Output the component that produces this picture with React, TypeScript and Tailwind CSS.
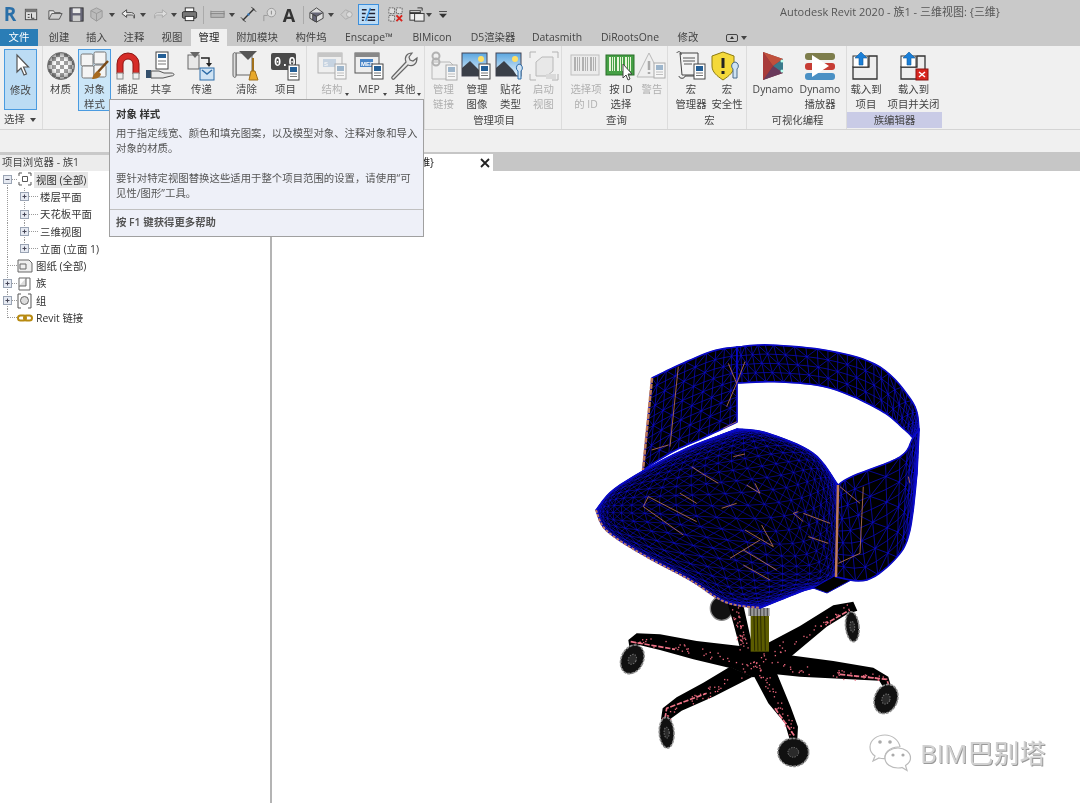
import type { ReactNode } from "react";

type P = [number, number];

// ---------- chair geometry helpers ----------
function smooth(p: P[], n = 8): P[] {
  const out: P[] = [];
  const len = p.length;
  const at = (i: number) => p[Math.max(0, Math.min(len - 1, i))];
  for (let i = 0; i < len - 1; i++) {
    const [a, b, c, d] = [at(i - 1), at(i), at(i + 1), at(i + 2)];
    for (let k = 0; k < n; k++) {
      const t = k / n;
      const f = (j: number) =>
        0.5 *
        (2 * b[j] +
          (c[j] - a[j]) * t +
          (2 * a[j] - 5 * b[j] + 4 * c[j] - d[j]) * t * t +
          (3 * b[j] - a[j] - 3 * c[j] + d[j]) * t * t * t);
      out.push([f(0), f(1)]);
    }
  }
  out.push(p[len - 1]);
  return out;
}

function sample(p: P[], u: number): P {
  const x = u * (p.length - 1);
  const i = Math.min(Math.floor(x), p.length - 2);
  const t = x - i;
  return [p[i][0] + (p[i + 1][0] - p[i][0]) * t, p[i][1] + (p[i + 1][1] - p[i][1]) * t];
}

const pts = (a: P[]) => a.map((q) => `${q[0].toFixed(1)} ${q[1].toFixed(1)}`).join(" L");
const seg = (a: P, b: P) => `M${a[0].toFixed(1)} ${a[1].toFixed(1)} L${b[0].toFixed(1)} ${b[1].toFixed(1)} `;

function meshPath(grid: P[][]) {
  let d = "";
  const cols = grid.length - 1;
  grid.forEach((col, c) => {
    d += `M${pts(col)} `;
    if (c < cols) {
      col.forEach((q, r) => {
        d += seg(q, grid[c + 1][r]);
        if (r < col.length - 1) {
          d += (c + r) % 2 === 0 ? seg(q, grid[c + 1][r + 1]) : seg(col[r + 1], grid[c + 1][r]);
        }
      });
    }
  });
  return d;
}

function Strip({ top, bottom, cols, rows }: { top: P[]; bottom: P[]; cols: number; rows: number }) {
  const t = smooth(top);
  const b = smooth(bottom);
  const grid: P[][] = [];
  for (let c = 0; c <= cols; c++) {
    const u = c / cols;
    const a = sample(t, u);
    const e = sample(b, u);
    const col: P[] = [];
    for (let r = 0; r <= rows; r++) {
      const v = r / rows;
      col.push([a[0] + (e[0] - a[0]) * v, a[1] + (e[1] - a[1]) * v]);
    }
    grid.push(col);
  }
  return (
    <g>
      <path d={`M${pts(t)} L${pts([...b].reverse())} Z`} fill="#000" stroke="#0808c0" strokeWidth="1.600" />
      <path d={meshPath(grid)} fill="none" stroke="#0c0cd0" strokeWidth="0.7" />
    </g>
  );
}

function Seat() {
  const A: P = [596, 510];
  const B: P = [737, 429];
  const C: P = [838, 485];
  const D: P = [760, 608];
  const c0 = smooth([A, [613, 490], [650, 467], [690, 447], B]);
  const c1 = smooth([D, [800, 592], [833, 578], [840, 537], C]);
  const c2 = smooth([A, [606, 530], [640, 553], [690, 580], [725, 602], D]);
  const c3 = smooth([B, [767, 433], [813, 453], C]);
  const ease = (x: number) => 0.5 - 0.5 * Math.cos(Math.PI * x);
  const N = 32;
  const grid: P[][] = [];
  for (let i = 0; i <= N; i++) {
    const u = ease(i / N);
    const col: P[] = [];
    for (let j = 0; j <= N; j++) {
      const v = ease(j / N);
      const a = sample(c0, u);
      const b = sample(c1, u);
      const c = sample(c2, v);
      const e = sample(c3, v);
      const f = (k: number) =>
        (1 - v) * a[k] + v * b[k] + (1 - u) * c[k] + u * e[k] -
        ((1 - u) * (1 - v) * A[k] + u * (1 - v) * B[k] + (1 - u) * v * D[k] + u * v * C[k]);
      col.push([f(0), f(1)]);
    }
    grid.push(col);
  }
  const outline = [...c0, ...c3, ...[...c1].reverse(), ...[...c2].reverse()];
  return (
    <g>
      <path d={`M${pts(outline)} Z`} fill="#000" stroke="#0606b8" strokeWidth="1.400" />
      <path d={meshPath(grid)} fill="none" stroke="#0c0cd0" strokeWidth="0.6" />
      <path d={`M${pts(c2)}`} fill="none" stroke="#b87862" strokeWidth="2" strokeDasharray="3 1.500" />
      <path d="M813 588 L827 593 L855 578 L838 574 Z" fill="#000" stroke="#0808c0" strokeWidth="1" />
    </g>
  );
}

const orangeSeat = [
  [460, 320, 495, 312], [335, 350, 365, 370], [365, 370, 415, 400], [500, 405, 540, 430], [540, 430, 525, 400],
  [205, 440, 350, 515], [205, 440, 190, 470], [190, 470, 310, 555], [300, 430, 350, 460], [425, 475, 470, 460],
  [640, 490, 670, 515], [640, 490, 655, 485], [670, 490, 750, 520], [495, 540, 580, 590], [545, 525, 580, 590],
  [540, 570, 450, 625], [490, 600, 590, 660], [490, 645, 570, 690], [685, 560, 745, 580],
];
const orangeBack = [
  [445, 40, 470, 100], [495, 35, 470, 100], [470, 100, 440, 170], [430, 235, 470, 215], [215, 300, 265, 285], [295, 50, 270, 290],
];
const orangeFront = [[780, 410, 840, 460], [850, 410, 840, 610], [775, 640, 840, 610], [985, 380, 990, 400]];

function Lines({ list, w = 2.400 }: { list: number[][]; w?: number }) {
  return (
    <g transform="translate(580 350) scale(0.3333)" stroke="#c87c58" strokeWidth={w}>
      {list.map((l, i) => (
        <line key={i} x1={l[0]} y1={l[1]} x2={l[2]} y2={l[3]} />
      ))}
    </g>
  );
}

const legs = [
  "380,60 430,75 462,220 420,205 400,130",
  "85,180 110,160 180,163 290,183 420,198 480,230 390,264 280,238 180,210 118,195 105,205 88,200",
  "505,188 600,138 700,76 760,65 772,92 742,102 680,140 575,228 480,240",
  "570,226 700,243 820,263 865,290 874,322 850,322 838,302 720,296 600,290 520,282 450,270",
  "460,285 530,278 572,380 594,440 592,478 568,475 555,430 505,370",
  "390,260 458,290 340,350 245,392 214,415 205,425 183,418 188,385 230,352 310,308",
  "390,262 420,198 510,188 575,228 530,282 458,292",
];
const legLines: [P, P][] = [
  [[470, 250], [100, 175]],
  [[470, 250], [750, 80]],
  [[470, 250], [860, 300]],
  [[470, 250], [585, 470]],
  [[470, 250], [195, 410]],
  [[430, 200], [400, 80]],
];
const wheels = [
  [365, 85, 34, 36, 0],
  [97, 238, 33, 45, 25],
  [757, 140, 20, 45, -6],
  [858, 357, 34, 45, 22],
  [200, 458, 22, 46, -3],
  [580, 517, 46, 42, 0],
];

function Base() {
  let seed = 7;
  const rnd = () => {
    seed = (seed * 1103515 + 12345) % 2147483;
    return seed / 2147483;
  };
  const specks: number[][] = [];
  legLines.forEach(([a, b]) => {
    for (let i = 0; i < 40; i++) {
      const t = rnd();
      specks.push([a[0] + (b[0] - a[0]) * t + (rnd() - 0.5) * 26, a[1] + (b[1] - a[1]) * t + (rnd() - 0.5) * 26]);
    }
  });
  return (
    <g transform="translate(600 580) scale(0.3333)">
      {wheels.slice(0, 1).map((w, i) => (
        <ellipse key={i} cx={w[0]} cy={w[1]} rx={w[2]} ry={w[3]} fill="#111" stroke="#888" strokeWidth="4" />
      ))}
      {legs.map((l, i) => (
        <polygon key={i} points={l} fill="#000" />
      ))}
      <rect x="452" y="105" width="55" height="110" fill="#5c5c00" />
      {[462, 472, 482, 494].map((x) => (
        <line key={x} x1={x} y1="108" x2={x + 2} y2="212" stroke="#1e1e00" strokeWidth="2.500" />
      ))}
      <rect x="445" y="84" width="64" height="24" fill="#9a9a9a" />
      {[452, 462, 472, 482, 492, 502].map((x) => (
        <line key={x} x1={x} y1="84" x2={x} y2="108" stroke="#333" strokeWidth="2.500" />
      ))}
      {specks.map((s, i) => (
        <rect key={i} x={s[0]} y={s[1]} width="4" height="4" fill="#e8657a" />
      ))}
      <g fill="none" stroke="#f07488" strokeWidth="5" strokeDasharray="16 5">
        <path d="M92 185 L225 208" />
        <path d="M720 283 L860 298 L868 320" />
        <path d="M195 415 L200 385 L320 340" />
        <path d="M740 95 L680 130" />
        <path d="M525 385 L585 470" />
      </g>
      {wheels.slice(1).map((w, i) => (
        <g key={i} transform={`rotate(${w[4]} ${w[0]} ${w[1]})`}>
          <ellipse cx={w[0]} cy={w[1]} rx={w[2]} ry={w[3]} fill="#111" stroke="#8c8c8c" strokeWidth="5" strokeDasharray="9 3" />
          <ellipse cx={w[0]} cy={w[1]} rx={w[2] * 0.35} ry={w[3] * 0.35} fill="#2a2a2a" stroke="#777" strokeWidth="3" strokeDasharray="4 4" />
        </g>
      ))}
    </g>
  );
}

function Chair() {
  return (
    <svg width="808" height="632" viewBox="272 171 808 632" className="block">
      <Strip
        top={[[652, 378], [679, 365], [713, 351], [737, 347]]}
        bottom={[[643, 470], [672, 452], [705, 437], [737, 422]]}
        cols={10}
        rows={9}
      />
      <Strip
        top={[[737, 347], [770, 345], [830, 351], [880, 367], [913, 403], [919, 430]]}
        bottom={[[737, 383], [780, 382], [830, 388], [880, 410], [905, 430], [913, 438]]}
        cols={28}
        rows={4}
      />
      <Lines list={orangeBack} />
      <line x1="652" y1="378" x2="643" y2="470" stroke="#c07a58" strokeWidth="2.500" strokeDasharray="5 1" />
      <Base />
      <Seat />
      <Lines list={orangeSeat} />
      <Strip
        top={[[838, 485], [853, 476], [900, 457], [913, 438], [919, 430]]}
        bottom={[[836, 577], [867, 580], [897, 557], [910, 530], [917, 473]]}
        cols={12}
        rows={8}
      />
      <Lines list={orangeFront} />
      <line x1="838" y1="485" x2="836" y2="577" stroke="#c07a58" strokeWidth="2.500" />
    </svg>
  );
}

// ---------- quick access icons ----------
const S = ({ children }: { children: ReactNode }) => (
  <svg width="17" height="17" viewBox="0 0 18 18" fill="none" className="shrink-0">
    {children}
  </svg>
);
const Drop = () => (
  <svg width="6" height="4" viewBox="0 0 6 4" className="shrink-0">
    <path d="M0 0H6L3 4Z" fill="#444" />
  </svg>
);

type QatCell = { cls: string; icon: ReactNode };
const qat: QatCell[] = [
  { cls: "w-[20px]", icon: <span className="text-[19px] font-bold text-[#2a6fa8] leading-none">R</span> },
  { cls: "w-[22px]", icon: <S><rect x="2.500" y="3.500" width="12" height="11" fill="#ddd" stroke="#444" /><rect x="2.500" y="3.500" width="12" height="3" fill="#777" /><path d="M5 9h2M5 12h2M9 8v5h3" stroke="#333" /></S> },
  { cls: "w-[3px]", icon: null },
  { cls: "w-[21px]", icon: <S><path d="M2 14V5h5l1 2h6v2" stroke="#555" fill="#e8e8e8" /><path d="M2 14l3-6h11l-3 6Z" fill="#cfcfcf" stroke="#555" /></S> },
  { cls: "w-[20px]", icon: <S><rect x="2" y="2" width="14" height="14" fill="#667" stroke="#333" /><rect x="5" y="2.500" width="8" height="5" fill="#e8e8e8" /><rect x="5" y="10" width="8" height="6" fill="#ccc" /></S> },
  { cls: "w-[21px]", icon: <S><path d="M9 2l6 3v7l-6 4-6-4V5Z" fill="#bbb" stroke="#999" /><path d="M3 5l6 3 6-3M9 8v8" stroke="#999" /></S> },
  { cls: "w-[10px]", icon: <Drop /> },
  { cls: "w-[1px]", icon: null },
  { cls: "w-[20px]", icon: <S><path d="M7 4L2 8l5 4V9.500h5c2 0 3 1 3 3.500 1-3 0-6-3-6H7Z" fill="#eee" stroke="#444" /></S> },
  { cls: "w-[10px]", icon: <Drop /> },
  { cls: "w-[24px]", icon: <S><path d="M11 4l5 4-5 4V9.500H6c-2 0-3 1-3 3.500-1-3 0-6 3-6h5Z" fill="#ddd" stroke="#aaa" /></S> },
  { cls: "w-[4px]", icon: <Drop /> },
  { cls: "w-[27px]", icon: <S><rect x="4.500" y="2" width="9" height="4" fill="#fff" stroke="#333" /><rect x="1.500" y="6" width="15" height="7" rx="1.500" fill="#777" stroke="#333" /><rect x="4.500" y="11" width="9" height="4.500" fill="#fff" stroke="#333" /></S> },
  { cls: "w-[1px]", icon: <span className="block w-px h-[18px] bg-[#aaa] shrink-0" /> },
  { cls: "w-[26px]", icon: <S><rect x="2" y="8" width="14" height="4" fill="#b5b5b5" stroke="#888" /><path d="M2 5v4M16 5v4M2 6h14" stroke="#888" /></S> },
  { cls: "w-[4px]", icon: <Drop /> },
  { cls: "w-[28px]", icon: <S><path d="M3 15L15 3" stroke="#333" strokeWidth="1.500" /><path d="M1 12l5 5M12 1l5 5" stroke="#333" /><circle cx="9" cy="9" r="1.300" fill="#3a7bbd" /></S> },
  { cls: "w-[14px]", icon: <S><circle cx="11" cy="7" r="4.500" fill="#ddd" stroke="#999" /><path d="M7 10H3v6" stroke="#999" /><path d="M11 5v4" stroke="#888" /></S> },
  { cls: "w-[26px]", icon: <span className="text-[18px] font-bold text-[#333] leading-none">A</span> },
  { cls: "w-[2px]", icon: <span className="block w-px h-[18px] bg-[#aaa] shrink-0" /> },
  { cls: "w-[24px]", icon: <S><path d="M9 2L2 7v6l7 4 7-4V7Z" fill="#ddd" stroke="#444" /><path d="M5 9v6l4 2V11ZM2 7l7 4 7-4" fill="#667" stroke="#444" /></S> },
  { cls: "w-[6px]", icon: <Drop /> },
  { cls: "w-[24px]", icon: <S><path d="M3 9l5-5 4 2v6l-4 2Z" fill="#ccc" stroke="#aaa" /><circle cx="12" cy="9" r="3" fill="#ddd" stroke="#aaa" /></S> },
  {
    cls: "w-[21px] h-[21px] border border-[#3d8fdc] bg-[#bcdcf6]",
    icon: <S><path d="M2 4h5M2 8h4M2 12h3M2 15h2M10 4h6M9 8h7M8 12h8M8 15h8" stroke="#223" strokeWidth="1.500" /><path d="M11 2L6 16" stroke="#2f8de0" strokeWidth="1.500" /></S>,
  },
  { cls: "w-[6px]", icon: null },
  { cls: "w-[20px]", icon: <S><rect x="2" y="2" width="6" height="6" fill="#ddd" stroke="#666" strokeDasharray="2 1" /><rect x="10" y="2" width="6" height="6" fill="#ddd" stroke="#666" strokeDasharray="2 1" /><rect x="2" y="10" width="6" height="6" fill="#ddd" stroke="#666" strokeDasharray="2 1" /><path d="M10 10l6 6M16 10l-6 6" stroke="#d8221c" strokeWidth="2" /></S> },
  { cls: "w-[22px]", icon: <S><rect x="2" y="5" width="11" height="10" fill="#eee" stroke="#333" /><rect x="7" y="8" width="10" height="8" fill="#eee" stroke="#333" /><path d="M2 7.500h11" stroke="#333" strokeWidth="2" /><path d="M10 2h5v3" stroke="#333" /></S> },
  { cls: "w-[4px]", icon: <Drop /> },
  { cls: "w-[24px]", icon: <svg width="8" height="7" viewBox="0 0 9 8" className="shrink-0"><path d="M0 .5H9" stroke="#333" /><path d="M0 3H9L4.500 8Z" fill="#333" /></svg> },
];

// ---------- ribbon icons, 32x32 ----------
const I = ({ children, dim }: { children: ReactNode; dim?: boolean }) => (
  <svg width="32" height="32" viewBox="0 0 32 32" fill="none" className={dim ? "shrink-0 opacity-40" : "shrink-0"}>
    {children}
  </svg>
);
const Doc = ({ x = 18, y = 14 }: { x?: number; y?: number }) => (
  <g>
    <rect x={x} y={y} width="11" height="15" fill="#fff" stroke="#444" />
    <rect x={x + 2} y={y + 2} width="7" height="5" fill="#245f96" />
    <path d={`M${x + 2} ${y + 9}h7M${x + 2} ${y + 11.500}h7`} stroke="#777" />
  </g>
);

const CursorIcon = () => <I><path d="M12 5v17l4-4 3 7 2.500-1-3-7h5Z" fill="#fff" stroke="#555" strokeWidth="1.200" /></I>;
const MaterialIcon = () => {
  const cells: ReactNode[] = [];
  for (let r = 0; r < 7; r++)
    for (let c = 0; c < 7; c++)
      if ((r + c) % 2 === 0) cells.push(<rect key={`${r}-${c}`} x={3 + c * 4} y={3 + r * 4} width="4" height="4" fill="#6a6a6a" />);
  return (
    <I>
      <defs>
        <clipPath id="ball"><circle cx="16" cy="16" r="13.500" /></clipPath>
        <radialGradient id="shade" cx="0.5" cy="0.5" r="0.5">
          <stop offset="0.5" stopColor="#fff" stopOpacity="0.35" />
          <stop offset="1" stopColor="#333" stopOpacity="0.55" />
        </radialGradient>
      </defs>
      <circle cx="16" cy="16" r="13.500" fill="#f4f4f4" />
      <g clipPath="url(#ball)">{cells}</g>
      <circle cx="16" cy="16" r="13.500" fill="url(#shade)" stroke="#777" />
    </I>
  );
};
const ObjectStyleIcon = () => (
  <I>
    {[[2, 4], [15, 2], [3, 16], [15, 15]].map(([x, y]) => (
      <rect key={`${x}${y}`} x={x} y={y} width="12" height="12" rx="1.500" fill="#f4f4f4" stroke="#777" />
    ))}
    <path d="M29 11L18 23" stroke="#7a4a18" strokeWidth="2.500" />
    <path d="M13 29c1-4 3-7 6-8l3 3c-1 4-5 5-9 5Z" fill="#a86a1e" />
  </I>
);
const MagnetIcon = () => (
  <I>
    <path d="M5 24V14a11 11 0 0 1 22 0v10h-6V14a5 5 0 0 0-10 0v10Z" fill="#d62c28" stroke="#8c1512" />
    <rect x="5" y="23" width="6" height="6" fill="#eee" stroke="#888" />
    <rect x="21" y="23" width="6" height="6" fill="#eee" stroke="#888" />
  </I>
);
const ShareIcon = () => (
  <I>
    <rect x="11" y="2" width="12" height="17" fill="#fff" stroke="#444" />
    <rect x="13" y="4" width="8" height="4" fill="#245f96" />
    <path d="M13 11h8M13 14h8" stroke="#777" />
    <rect x="1" y="20" width="5" height="8" fill="#34506c" />
    <path d="M6 21h8l5 2h7c4 0 4 3 0 3l-8 2H6Z" fill="#e8e8e8" stroke="#555" />
  </I>
);
const TransferIcon = () => (
  <I>
    <rect x="2" y="5" width="11" height="14" fill="#e8e8e8" stroke="#666" />
    <path d="M4 2h10l-5 6Z" fill="#666" />
    <path d="M15 8h8v6" stroke="#222" strokeWidth="1.500" />
    <path d="M20 13h6l-3 4Z" fill="#222" />
    <rect x="14" y="18" width="14" height="12" fill="#cfe3f4" stroke="#2d6ca8" />
    <path d="M16 20l5 4 5-4" stroke="#2d6ca8" strokeWidth="1.500" />
  </I>
);
const PurgeIcon = () => (
  <I>
    <path d="M5 3h16v22H5Z" fill="#eee" stroke="#666" />
    <path d="M2 5c0-3 3-3 3-1v22c0 2-3 2-3-1Z" fill="#ddd" stroke="#666" />
    <path d="M8 1h18l-9 9Z" fill="#555" />
    <path d="M22 8v14" stroke="#a0701c" strokeWidth="2" />
    <path d="M18 30l2-9h4l3 9Z" fill="#e8a92c" stroke="#a0701c" />
  </I>
);
const UnitsIcon = () => (
  <I>
    <rect x="1" y="3" width="25" height="17" rx="2" fill="#4a4a4a" />
    <text x="4" y="16" fontSize="12" fill="#fff" fontFamily="Liberation Mono, monospace" fontWeight="700">0.0</text>
    <Doc x={18} y={15} />
  </I>
);
const WinIcon = ({ label, dim, color = "#8aa9cc" }: { label: string; dim?: boolean; color?: string }) => (
  <I dim={dim}>
    <rect x="2" y="3" width="24" height="20" fill="#eee" stroke="#555" />
    <rect x="2" y="3" width="24" height="4" fill="#888" />
    <rect x="7" y="9" width="13" height="8" fill={color} />
    <text x="8" y="15.500" fontSize="6" fill="#fff" fontFamily="Liberation Sans, sans-serif" fontWeight="700">{label}</text>
    <Doc x={19} y={14} />
  </I>
);
const WrenchIcon = () => (
  <I>
    <path d="M3 27l14-15c-2-5 1-9 6-9l-3 4 1 3 3 1 4-3c0 6-4 9-9 7L5 29c-1 1-3-1-2-2Z" fill="#e8e8e8" stroke="#666" strokeWidth="1.200" />
  </I>
);
const LinkDocIcon = () => (
  <I dim>
    <path d="M4 12h18l6 6v11H4Z" fill="#eee" stroke="#666" />
    <circle cx="8" cy="6" r="3.500" stroke="#555" strokeWidth="2" />
    <circle cx="8" cy="12" r="3.500" stroke="#555" strokeWidth="2" />
    <Doc x={18} y={15} />
  </I>
);
const ImageIcon = ({ decal }: { decal?: boolean }) => (
  <I>
    <defs>
      <linearGradient id="sky" x1="0" y1="0" x2="0" y2="1"><stop offset="0" stopColor="#5aa6e0" /><stop offset="1" stopColor="#eaf4fb" /></linearGradient>
    </defs>
    <rect x="1" y="3" width="25" height="23" fill="url(#sky)" stroke="#445" />
    <circle cx="20" cy="9" r="3" fill="#ffe066" />
    <path d="M1 26V18l8-7 9 9 4 6Z" fill="#3a3f48" />
    {decal ? <path d="M24 14a4 4 0 0 1 2 7v8h-3v-8a4 4 0 0 1 1-7Z" fill="#cfe3f4" stroke="#2d6ca8" /> : <Doc x={18} y={14} />}
  </I>
);
const ViewStartIcon = () => (
  <I dim>
    <path d="M2 8V2h6M24 2h6v6M30 24v6h-6M8 30H2v-6" stroke="#555" />
    <path d="M8 12l6-5h11v14l-6 5H8Z" fill="#ddd" stroke="#666" />
    <path d="M18 24h10v5H18Z" fill="#bbb" />
  </I>
);
const Barcode = ({ green, dim }: { green?: boolean; dim?: boolean }) => (
  <I dim={dim}>
    <rect x="1" y="5" width="28" height="20" fill={green ? "#45a045" : "#e4e4e4"} stroke={green ? "#2a6e2a" : "#777"} />
    {[4, 7, 9, 12, 15, 17, 20, 23, 25].map((x) => (
      <rect key={x} x={x} y="7" width={x % 2 ? 1 : 2} height="14" fill={green ? "#e8f4d8" : "#555"} />
    ))}
    {green ? <path d="M18 14v14l3-3 2 5 2-1-2-5h4Z" fill="#fff" stroke="#444" /> : null}
  </I>
);
const WarnIcon = () => (
  <I dim>
    <path d="M13 3L1 27h24Z" fill="#eee" stroke="#666" />
    <path d="M13 11v9M13 22v2" stroke="#444" strokeWidth="2.500" />
    <Doc x={18} y={13} />
  </I>
);
const MacroIcon = () => (
  <I>
    <path d="M5 3h18v22H7Z" fill="#f4f4f4" stroke="#444" />
    <path d="M2 3c0-2 5-2 4 2M4 26c0 3 6 3 6 0h12" stroke="#444" />
    <path d="M8 8h12M8 11h12M9 14h8" stroke="#555" />
    <Doc x={19} y={14} />
  </I>
);
const ShieldIcon = () => (
  <I>
    <path d="M12 2l11 4v10c0 6-5 10-11 14C6 26 1 22 1 16V6Z" fill="#f4d93a" stroke="#8c7a10" />
    <path d="M12 8v10M12 21v3" stroke="#222" strokeWidth="3" />
    <path d="M24 12a4 4 0 0 1 2 7v9h-4v-9a4 4 0 0 1 2-7Z" fill="#cfe3f4" stroke="#4a6c8c" />
  </I>
);
const DynamoIcon = () => (
  <I>
    <path d="M6 2l20 7v14L6 30Z" fill="#8a3a3a" />
    <path d="M6 2l20 7-10 7Z" fill="#c0503c" />
    <path d="M26 9v14l-10-7Z" fill="#3a7a8c" />
    <path d="M6 30l10-14 10 7Z" fill="#6a3a5c" />
    <path d="M6 2l10 14L6 30Z" fill="#a83a3a" />
    <circle cx="25" cy="11" r="1.500" fill="#bfe" />
    <circle cx="25" cy="21" r="1.500" fill="#bfe" />
  </I>
);
const PlayerIcon = () => (
  <I>
    <rect x="1" y="3" width="30" height="7" rx="3" fill="#7d7d4c" />
    <rect x="1" y="13" width="30" height="7" rx="3" fill="#c63c34" />
    <rect x="1" y="23" width="30" height="7" rx="3" fill="#4a90c4" />
    <path d="M8 5v22l17-11Z" fill="#fff" />
  </I>
);
const LoadIcon = ({ close }: { close?: boolean }) => (
  <I>
    <path d="M19 6h8v23H3V17h16Z" fill="#eee" stroke="#333" strokeWidth="1.300" />
    <rect x="3" y="6" width="15" height="11" fill="#fff" stroke="#333" />
    <path d="M11 2l6 6h-4v7H9V8H5Z" fill="#1a7fd8" stroke="#0d5aa0" strokeWidth=".6" />
    {close ? (
      <g>
        <rect x="18" y="19" width="12" height="11" fill="#d8261f" stroke="#8c1512" />
        <path d="M21 22l6 5M27 22l-6 5" stroke="#fff" strokeWidth="1.500" />
      </g>
    ) : null}
  </I>
);

type Item = { cls: string; icon: ReactNode; lines: string[]; dim?: boolean; arrow?: boolean; sel?: boolean };
type Panel = { cls: string; label: string; items: Item[]; accent?: boolean };

const panels: Panel[] = [
  {
    cls: "w-[264px]",
    label: "",
    items: [
      { cls: "w-[35px]", icon: <MaterialIcon />, lines: ["材质"] },
      { cls: "w-[33px]", icon: <ObjectStyleIcon />, lines: ["对象", "样式"], sel: true },
      { cls: "w-[33px]", icon: <MagnetIcon />, lines: ["捕捉"] },
      { cls: "w-[34px]", icon: <ShareIcon />, lines: ["共享"] },
      { cls: "w-[47px]", icon: <TransferIcon />, lines: ["传递"] },
      { cls: "w-[43px]", icon: <PurgeIcon />, lines: ["清除"] },
      { cls: "w-[35px]", icon: <UnitsIcon />, lines: ["项目", "单位"] },
    ],
  },
  {
    cls: "w-[118px] pl-[7px]",
    label: "",
    items: [
      { cls: "w-[36px]", icon: <WinIcon label="S" dim />, lines: ["结构", "设置"], dim: true, arrow: true },
      { cls: "w-[38px]", icon: <WinIcon label="MEP" color="#4a86c8" />, lines: ["MEP", "设置"], arrow: true },
      { cls: "w-[34px]", icon: <WrenchIcon />, lines: ["其他", "设置"], arrow: true },
    ],
  },
  {
    cls: "w-[137px] pl-[2px]",
    label: "管理项目",
    items: [
      { cls: "w-[33px]", icon: <LinkDocIcon />, lines: ["管理", "链接"], dim: true },
      { cls: "w-[34px]", icon: <ImageIcon />, lines: ["管理", "图像"] },
      { cls: "w-[33px]", icon: <ImageIcon decal />, lines: ["贴花", "类型"] },
      { cls: "w-[33px]", icon: <ViewStartIcon />, lines: ["启动", "视图"], dim: true },
    ],
  },
  {
    cls: "w-[106px] pl-[4px]",
    label: "查询",
    items: [
      { cls: "w-[40px]", icon: <Barcode dim />, lines: ["选择项", "的 ID"], dim: true },
      { cls: "w-[30px]", icon: <Barcode green />, lines: ["按 ID", "选择"] },
      { cls: "w-[32px]", icon: <WarnIcon />, lines: ["警告"], dim: true },
    ],
  },
  {
    cls: "w-[79px] pl-[5px]",
    label: "宏",
    items: [
      { cls: "w-[36px]", icon: <MacroIcon />, lines: ["宏", "管理器"] },
      { cls: "w-[36px]", icon: <ShieldIcon />, lines: ["宏", "安全性"] },
    ],
  },
  {
    cls: "w-[100px] pl-[2px]",
    label: "可视化编程",
    items: [
      { cls: "w-[48px]", icon: <DynamoIcon />, lines: ["Dynamo"] },
      { cls: "w-[46px]", icon: <PlayerIcon />, lines: ["Dynamo", "播放器"] },
    ],
  },
  {
    cls: "w-[95px]",
    label: "族编辑器",
    accent: true,
    items: [
      { cls: "w-[38px]", icon: <LoadIcon />, lines: ["载入到", "项目"] },
      { cls: "w-[57px]", icon: <LoadIcon close />, lines: ["载入到", "项目并关闭"] },
    ],
  },
];

const tabs = [
  { label: "创建", cls: "w-[38px]" },
  { label: "插入", cls: "w-[37px]" },
  { label: "注释", cls: "w-[38px]" },
  { label: "视图", cls: "w-[38px]" },
  { label: "管理", cls: "w-[36px] bg-[#f0f0f0] text-[#222]" },
  { label: "附加模块", cls: "w-[60px]" },
  { label: "构件坞", cls: "w-[48px]" },
  { label: "Enscape™", cls: "w-[68px]" },
  { label: "BIMicon", cls: "w-[58px]" },
  { label: "D5渲染器", cls: "w-[64px]" },
  { label: "Datasmith", cls: "w-[64px]" },
  { label: "DiRootsOne", cls: "w-[82px]" },
  { label: "修改", cls: "w-[34px]" },
];

// ---------- project browser ----------
const Box = ({ x, minus }: { x: number; minus?: boolean }) => (
  <g>
    <rect x={x - 4} y="4.500" width="8" height="8" fill="#e6eaf2" stroke="#9aa4b4" />
    <path d={`M${x - 2} 8.500h4`} stroke="#445" />
    {minus ? null : <path d={`M${x} 6.500v4`} stroke="#445" />}
  </g>
);
const dots = { stroke: "#999", strokeDasharray: "1 1" };

type Row = { label: string; kind: "root" | "sub" | "item" | "plus" | "end"; last?: boolean; icon?: ReactNode; selected?: boolean };
const rows: Row[] = [
  { label: "视图 (全部)", kind: "root", selected: true, icon: <path d="M1 4V1h3M10 1h3v3M13 10v3h-3M4 13H1v-3M4.500 4.500h5v5h-5Z" stroke="#555" /> },
  { label: "楼层平面", kind: "sub" },
  { label: "天花板平面", kind: "sub" },
  { label: "三维视图", kind: "sub" },
  { label: "立面 (立面 1)", kind: "sub", last: true },
  { label: "图纸 (全部)", kind: "item", icon: <g><path d="M0 2h11l3 3v9H0Z" fill="#eee" stroke="#666" /><path d="M2 6h6v5H2Z" stroke="#666" /></g> },
  { label: "族", kind: "plus", icon: <g><path d="M1 2h11v12H1Z" fill="#fff" stroke="#666" /><path d="M1 10h7V2" stroke="#666" fill="#ddd" /></g> },
  { label: "组", kind: "plus", icon: <g><path d="M3 1H0v14h3M10 1h3v14h-3" stroke="#555" /><circle cx="6.500" cy="7.500" r="4" fill="#ddd" stroke="#666" /></g> },
  { label: "Revit 链接", kind: "end", icon: <g stroke="#b88a10" strokeWidth="2"><rect x="0" y="5.500" width="8" height="5" rx="2.500" /><rect x="6" y="5.500" width="8" height="5" rx="2.500" /></g> },
];

function TreeRow({ row }: { row: Row }) {
  const isSub = row.kind === "sub";
  return (
    <div className="flex items-center h-[17.300px]">
      <svg width={isSub ? 40 : 36} height="17.300" viewBox={`0 0 ${isSub ? 40 : 36} 17.300`} fill="none" className="shrink-0">
        {row.kind !== "root" ? <path d={`M7.500 0V${row.kind === "end" ? 9 : 18}`} {...dots} /> : <path d="M7.500 12V18" {...dots} />}
        {row.kind === "root" ? <path d="M24.500 17V18" {...dots} /> : null}
        {row.kind === "root" || row.kind === "plus" ? <path d="M12 8.500H18" {...dots} /> : null}
        {row.kind === "item" || row.kind === "end" ? <path d="M8 8.500H17" {...dots} /> : null}
        {row.kind === "root" ? <Box x={7.500} minus /> : null}
        {row.kind === "plus" ? <Box x={7.500} /> : null}
        {isSub ? (
          <g>
            <path d={`M24.500 0V${row.last ? 5 : 18}`} {...dots} />
            <path d="M29 8.500H38" {...dots} />
            <Box x={24.500} />
          </g>
        ) : null}
        {row.icon ? <g transform="translate(18 1)">{row.icon}</g> : null}
      </svg>
      <span className={row.selected ? "bg-[#e6e6e6] px-[2px] -ml-[2px] leading-[16px]" : "leading-[16px]"}>{row.label}</span>
    </div>
  );
}

export default function App() {
  return (
    <div className="relative w-[1080px] h-[803px] overflow-hidden bg-white flex flex-col text-[10.400px] text-[#444] font-['Open_Sans','Noto_Sans_CJK_SC',sans-serif] blur-[0.3px]">
      {/* Title bar */}
      <div className="h-[29px] bg-[#c9c9c9] flex items-center relative shrink-0">
        {qat.map((c, i) => (
          <div key={i} className={`${c.cls} flex items-center justify-center shrink-0`}>
            {c.icon}
          </div>
        ))}
        <div className="absolute left-[780px] top-[4px] text-[11px] leading-[16px] text-[#555]">Autodesk Revit 2020 - 族1 - 三维视图: {"{三维}"}</div>
      </div>

      {/* Tabs */}
      <div className="h-[17px] bg-[#c9c9c9] flex shrink-0 leading-[17px]">
        <div className="w-[38px] bg-[#2a7db6] text-white text-center">文件</div>
        <div className="w-[2px]" />
        {tabs.map((t) => (
          <div key={t.label} className={`${t.cls} text-center`}>
            {t.label}
          </div>
        ))}
        <div className="w-[43px] flex items-center justify-end gap-[3px] pr-[1px]">
          <span className="w-[12px] h-[8px] border border-[#444] rounded-[2px] flex items-center justify-center">
            <span className="w-0 h-0 border-x-[2px] border-x-transparent border-b-[3px] border-b-[#333]" />
          </span>
          <Drop />
        </div>
      </div>

      {/* Ribbon */}
      <div className="h-[84px] bg-[#f0f0f0] border-b border-[#d4d4d4] flex shrink-0">
        <div className="w-[43px] flex flex-col border-r border-[#dcdcdc] pl-[4px] pt-[3px]">
          <div className="w-[33px] h-[62px] border border-[#4a9be0] bg-[#bcdcf4] flex flex-col items-center">
            <CursorIcon />
            <span className="mt-[1px] leading-[15px]">修改</span>
          </div>
          <div className="flex items-center gap-[5px] h-[19px]">
            选择
            <Drop />
          </div>
        </div>
        {panels.map((p, idx) => (
          <div key={idx} className={`${p.cls} flex flex-col ${p.accent ? "" : "border-r border-[#dcdcdc]"} pt-[3px]`}>
            <div className="flex h-[62px]">
              {p.items.map((it) => (
                <div
                  key={it.lines.join("")}
                  className={`${it.cls} relative h-[62px] flex flex-col items-center shrink-0 ${it.sel ? "border border-[#4a9be0] bg-[#cbe6f8]" : "pt-[1px]"} ${it.dim ? "text-[#b0b0b0]" : ""}`}
                >
                  {it.icon}
                  <span className="leading-[15px] whitespace-nowrap">{it.lines[0]}</span>
                  {it.lines[1] ? <span className="leading-[15px] whitespace-nowrap">{it.lines[1]}</span> : null}
                  {it.arrow ? <span className="absolute right-[1px] top-[44px] w-0 h-0 border-x-[2.500px] border-x-transparent border-t-[3px] border-t-[#444]" /> : null}
                </div>
              ))}
            </div>
            <div className={`mt-auto mb-[1px] h-[16px] leading-[16px] text-center ${p.accent ? "bg-[#c9cbe6]" : ""}`}>{p.label}</div>
          </div>
        ))}
      </div>

      {/* Options bar */}
      <div className="h-[22px] bg-[#f0f0f0] shrink-0" />

      {/* Workspace */}
      <div className="flex-1 flex min-h-0">
        <div className="w-[270px] flex flex-col shrink-0">
          <div className="h-[19px] bg-[#ececec] border-t-[3px] border-[#c9c9c9] pl-[2px] leading-[15px] shrink-0">项目浏览器 - 族1</div>
          <div className="text-[#333]">
            {rows.map((r) => (
              <TreeRow key={r.label} row={r} />
            ))}
          </div>
        </div>
        <div className="w-[2px] bg-[#b4b4b4] shrink-0" />
        <div className="flex-1 flex flex-col min-w-0">
          <div className="h-[19px] flex shrink-0 bg-[#c6c6c6]">
            <div className="w-[221px] mt-[2px] bg-white flex items-center justify-end pr-[3px]">
              <span className="text-[#222] mr-[46px]">维{"}"}</span>
              <svg width="10" height="10" viewBox="0 0 10 10" className="shrink-0"><path d="M1 1l8 8M9 1l-8 8" stroke="#222" strokeWidth="1.800" /></svg>
            </div>
          </div>
          <Chair />
        </div>
      </div>

      {/* Tooltip */}
      <div className="absolute left-[109px] top-[99px] w-[315px] h-[138px] bg-[#eef0f8] border border-[#a0a0a0] flex flex-col text-[#555] leading-[15.500px] whitespace-nowrap">
        <div className="px-[6px] pt-[7px] font-semibold text-[#333]">对象 样式</div>
        <div className="px-[6px] pt-[3px]">
          用于指定线宽、颜色和填充图案，以及模型对象、注释对象和导入
          <br />
          对象的材质。
        </div>
        <div className="px-[6px] pt-[14px]">
          要针对特定视图替换这些适用于整个项目范围的设置，请使用“可
          <br />
          见性/图形”工具。
        </div>
        <div className="mt-auto border-t border-[#c0c0c0] h-[27px] px-[6px] flex items-center font-semibold">按 F1 键获得更多帮助</div>
      </div>

      {/* Watermark */}
      <div className="absolute left-[869px] top-[733px] flex items-center gap-[7px]">
        <svg width="44" height="40" viewBox="0 0 44 40" fill="#fff" stroke="#bbb" strokeWidth="1.200" className="shrink-0">
          <path d="M16 2c-8 0-15 5-15 12 0 4 2 7 5 9l-2 5 6-3c2 .6 4 .8 6 .7C15 20 21 14 29 14c1 0 2 0 2 .2C30 7 23 2 16 2Z" />
          <path d="M29 15c-7 0-13 4-13 10s6 10 13 10c2 0 3 0 4-.5l5 3-1.500-5c3-2 5-4.500 5-7.500 0-6-6-10-12.500-10Z" />
          <circle cx="11" cy="9" r="1.800" fill="#aaa" stroke="none" />
          <circle cx="21" cy="9" r="1.800" fill="#aaa" stroke="none" />
          <circle cx="24" cy="22" r="1.600" fill="#aaa" stroke="none" />
          <circle cx="34" cy="22" r="1.600" fill="#aaa" stroke="none" />
        </svg>
        <span className="text-[26px] leading-[30px] text-[#d2d2d2] [text-shadow:1px_1px_0_#999]">BIM巴别塔</span>
      </div>
    </div>
  );
}
